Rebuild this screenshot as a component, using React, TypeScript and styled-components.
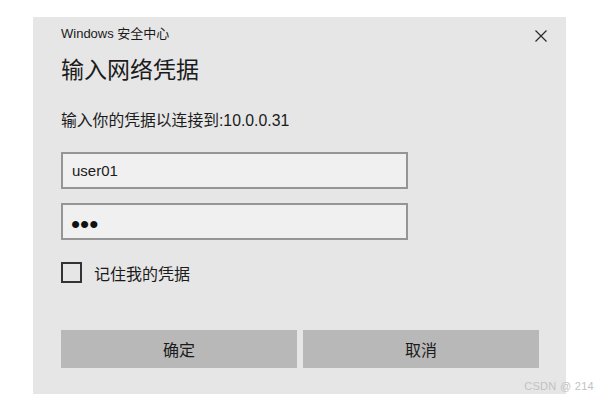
import styled, { createGlobalStyle } from "styled-components";

const GlobalStyle = createGlobalStyle`
  html, body {
    margin: 0;
    padding: 0;
    background: #ffffff;
  }
  body {
    font-family: "Liberation Sans", "Noto Sans CJK SC", sans-serif;
    color: #1b1b1b;
  }
`;

const Page = styled.div`
  position: relative;
  width: 602px;
  height: 398px;
  padding: 17px 0 0 33px;
  box-sizing: border-box;
`;

const Dialog = styled.div`
  width: 533px;
  height: 377px;
  box-sizing: border-box;
  padding: 0 27px 0 28px;
  background: #e6e6e6;
  display: flex;
  flex-direction: column;
`;

const TitleBar = styled.div`
  margin-top: 8px;
  height: 18px;
  display: flex;
  align-items: center;
  justify-content: space-between;
`;

const AppName = styled.span`
  font-size: 13px;
  line-height: 18px;
  color: #1b1b1b;
`;

const CloseButton = styled.button`
  width: 16px;
  height: 16px;
  margin: 4px -10px 0 0;
  padding: 0;
  border: none;
  background: transparent;
  display: flex;
  align-items: center;
  justify-content: center;
  color: #2a2a2a;
  cursor: pointer;
`;

const Heading = styled.h1`
  margin: 12px 0 0;
  font-size: 23px;
  line-height: 30px;
  font-weight: normal;
  color: #1b1b1b;
`;

const Message = styled.p`
  margin: 25px 0 0;
  font-size: 15.8px;
  line-height: 22px;
  color: #1b1b1b;
`;

const Field = styled.input<{ $first?: boolean }>`
  margin-top: ${(p) => (p.$first ? "20px" : "14px")};
  width: 347px;
  height: 37px;
  box-sizing: border-box;
  padding: 0 9px;
  border: 2px solid #959595;
  background: #f0f0f0;
  font-family: "Liberation Sans", "Noto Sans CJK SC", sans-serif;
  font-size: 15px;
  color: #1b1b1b;
  outline: none;
  &[type="password"] {
    font-size: 26px;
    padding: 5px 9px 0 8px;
    color: #111111;
  }
`;

const CheckRow = styled.label`
  margin-top: 22px;
  height: 21px;
  display: flex;
  align-items: center;
  gap: 12px;
  font-size: 16px;
  color: #1b1b1b;
`;

const Box = styled.span`
  width: 21px;
  height: 21px;
  box-sizing: border-box;
  border: 2px solid #333333;
`;

const ButtonRow = styled.div`
  margin-top: 47px;
  display: flex;
  gap: 6px;
`;

const ActionButton = styled.button`
  flex: 1;
  height: 38px;
  border: none;
  background: #b8b8b8;
  font-family: "Liberation Sans", "Noto Sans CJK SC", sans-serif;
  font-size: 16px;
  color: #1b1b1b;
  cursor: pointer;
`;

const Watermark = styled.span`
  position: absolute;
  right: 8px;
  bottom: 6px;
  font-size: 11px;
  color: #c2c2c2;
  letter-spacing: 0.3px;
`;

export default function App() {
  return (
    <>
      <GlobalStyle />
      <Page>
        <Dialog>
          <TitleBar>
            <AppName>Windows 安全中心</AppName>
            <CloseButton aria-label="关闭">
              <svg width="12" height="12" viewBox="0 0 12 12">
                <path d="M0.5 0.5 L11.5 11.5 M11.5 0.5 L0.5 11.5" stroke="currentColor" strokeWidth="1.2" />
              </svg>
            </CloseButton>
          </TitleBar>
          <Heading>输入网络凭据</Heading>
          <Message>输入你的凭据以连接到:10.0.0.31</Message>
          <Field $first defaultValue="user01" />
          <Field type="password" defaultValue="abc" />
          <CheckRow>
            <Box />
            记住我的凭据
          </CheckRow>
          <ButtonRow>
            <ActionButton>确定</ActionButton>
            <ActionButton>取消</ActionButton>
          </ButtonRow>
        </Dialog>
        <Watermark>CSDN @ 214</Watermark>
      </Page>
    </>
  );
}
